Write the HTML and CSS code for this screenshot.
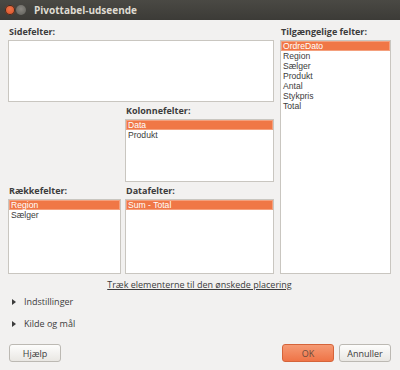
FILE: index.html
```html
<!DOCTYPE html>
<html lang="da">
<head>
	<meta charset="UTF-8">
	<title>Pivottabel-udseende</title>
	<link rel="stylesheet" href="styles.css">
</head>
<body>
	<div class="window">
		<div class="titlebar">
			<span class="wbtn close"></span>
			<span class="wbtn min"></span>
			<span class="title">Pivottabel-udseende</span>
		</div>
		<div class="content">
			<div class="fields">
				<div class="left">
					<div class="field">
						<div class="label">Sidefelter:</div>
						<ul class="list side"></ul>
					</div>
					<div class="field kol">
						<div class="label">Kolonnefelter:</div>
						<ul class="list kol-list">
							<li class="sel">Data</li>
							<li>Produkt</li>
						</ul>
					</div>
					<div class="row">
						<div class="field rk">
							<div class="label">Rækkefelter:</div>
							<ul class="list low">
								<li class="sel">Region</li>
								<li>Sælger</li>
							</ul>
						</div>
						<div class="field data">
							<div class="label">Datafelter:</div>
							<ul class="list low">
								<li class="sel">Sum - Total</li>
							</ul>
						</div>
					</div>
				</div>
				<div class="field avail">
					<div class="label">Tilgængelige felter:</div>
					<ul class="list tall">
						<li class="sel">OrdreDato</li>
						<li>Region</li>
						<li>Sælger</li>
						<li>Produkt</li>
						<li>Antal</li>
						<li>Stykpris</li>
						<li>Total</li>
					</ul>
				</div>
			</div>
			<div class="hint"><span>Træk elementerne til den ønskede placering</span></div>
			<div class="expander first"><i></i>Indstillinger</div>
			<div class="expander"><i></i>Kilde og mål</div>
			<div class="buttons">
				<button class="btn">Hjælp</button>
				<span class="spacer"></span>
				<button class="btn ok">OK</button>
				<button class="btn">Annuller</button>
			</div>
		</div>
	</div>
</body>
</html>
```

FILE: styles.css
```css
*{
	margin:0;
	padding:0;
	list-style: none;
	box-sizing: border-box;
}
body{
	width: 400px;
	height: 370px;
	background: #f2f1f0;
	font-family: "Open Sans", "DejaVu Sans", sans-serif;
	font-size: 9px;
	color: #3c3c3c;
	overflow: hidden;
}
.titlebar{
	height: 20px;
	background: linear-gradient(#4a4944, #3c3b37);
	display: flex;
	align-items: center;
	padding-left: 5px;
}
.wbtn{
	width: 10px;
	height: 10px;
	border-radius: 50%;
	margin-right: 1px;
}
.close{
	background: radial-gradient(circle at 50% 40%, #f0744a, #d24a1f);
	box-shadow: 0 0 0 1px #3a2a22 inset;
}
.min{
	background: radial-gradient(circle at 50% 40%, #8a8882, #5e5d58);
}
.title{
	margin-left: 7px;
	color: #dfdbd2;
	font-weight: bold;
	font-size: 10px;
}
.content{
	padding: 6px 9px 0 8px;
}
.fields{
	display: flex;
	gap: 6px;
}
.left{
	width: 266px;
}
.label{
	height: 12px;
	line-height: 12px;
	margin-bottom: 2px;
	font-weight: bold;
	padding-left: 1px;
}
.list{
	background: #fff;
	border: 1px solid #c9c6c0;
	height: 62px;
}
.list li{
	height: 10px;
	line-height: 10px;
	padding-left: 2px;
	font-family: "Liberation Sans", Arial, sans-serif;
	font-size: 8.6px;
	white-space: nowrap;
}
.list li.sel{
	background: #f07746;
	color: #fff;
	box-shadow: 0 0 0 1px #f4a07d inset;
}
.kol{
	margin: 3px 0 0 117px;
}
.kol-list{
	height: 63px;
}
.row{
	display: flex;
	gap: 4px;
	margin-top: 3px;
}
.rk{
	width: 113px;
}
.data{
	width: 149px;
}
.low{
	height: 75px;
}
.avail{
	width: 111px;
}
.tall{
	height: 234px;
}
.hint{
	margin-top: 5px;
	text-align: center;
	height: 12px;
	line-height: 12px;
}
.hint span{
	text-decoration: underline;
}
.expander{
	height: 12px;
	line-height: 12px;
	margin-top: 10px;
	display: flex;
	align-items: center;
	padding-left: 4px;
}
.expander.first{
	margin-top: 5px;
}
.expander i{
	width: 0;
	height: 0;
	border-left: 4px solid #3c3c3c;
	border-top: 3px solid transparent;
	border-bottom: 3px solid transparent;
	margin-right: 8px;
}
.buttons{
	display: flex;
	gap: 5px;
	margin-top: 14px;
	padding-left: 1px;
}
.spacer{
	flex: 1;
}
.btn{
	width: 52px;
	height: 18px;
	border: 1px solid #bcb9b3;
	border-radius: 3px;
	background: linear-gradient(#fdfdfc, #e9e7e3);
	font-family: "Open Sans", "DejaVu Sans", sans-serif;
	font-size: 9px;
	color: #3c3c3c;
}
.btn.ok{
	background: linear-gradient(#f59a74, #ef7447);
	border-color: #d5643a;
	color: #6a4a3c;
}
```
